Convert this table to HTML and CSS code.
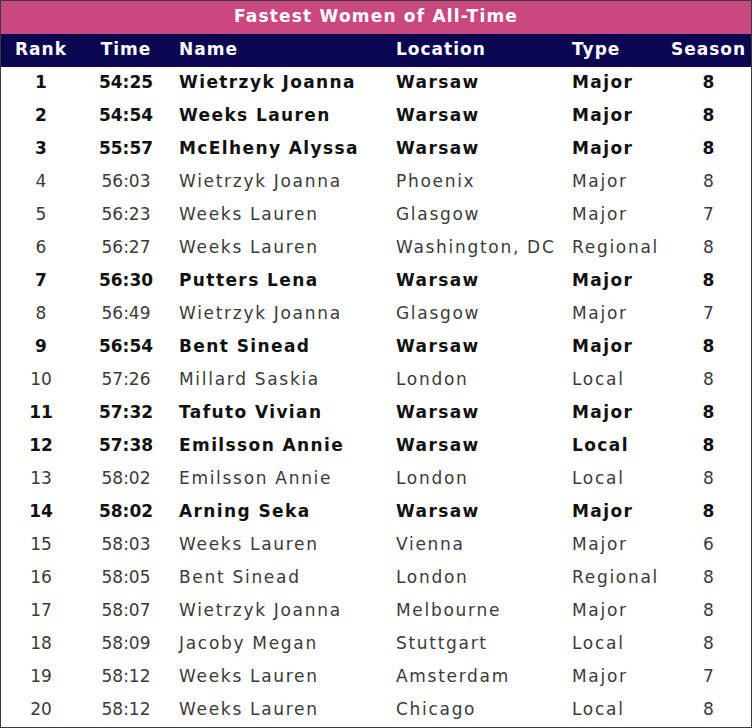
FILE: index.html
```html
<!DOCTYPE html>
<html>
<head>
<meta charset="utf-8">
<link rel="stylesheet" href="styles.css">
</head>
<body>
<div class="board">
  <div class="title">Fastest Women of All-Time</div>
  <table class="grid">
    <colgroup>
      <col class="c-rank"><col class="c-time"><col class="c-name"><col class="c-loc"><col class="c-type"><col class="c-season">
    </colgroup>
    <thead>
      <tr><th class="ctr">Rank</th><th class="ctr">Time</th><th>Name</th><th>Location</th><th>Type</th><th class="ctr">Season</th></tr>
    </thead>
    <tbody>
      <tr class="b"><td class="ctr">1</td><td class="ctr">54:25</td><td class="txt">Wietrzyk Joanna</td><td class="txt">Warsaw</td><td class="txt">Major</td><td class="ctr">8</td></tr>
      <tr class="b"><td class="ctr">2</td><td class="ctr">54:54</td><td class="txt">Weeks Lauren</td><td class="txt">Warsaw</td><td class="txt">Major</td><td class="ctr">8</td></tr>
      <tr class="b"><td class="ctr">3</td><td class="ctr">55:57</td><td class="txt">McElheny Alyssa</td><td class="txt">Warsaw</td><td class="txt">Major</td><td class="ctr">8</td></tr>
      <tr><td class="ctr">4</td><td class="ctr">56:03</td><td class="txt">Wietrzyk Joanna</td><td class="txt">Phoenix</td><td class="txt">Major</td><td class="ctr">8</td></tr>
      <tr><td class="ctr">5</td><td class="ctr">56:23</td><td class="txt">Weeks Lauren</td><td class="txt">Glasgow</td><td class="txt">Major</td><td class="ctr">7</td></tr>
      <tr><td class="ctr">6</td><td class="ctr">56:27</td><td class="txt">Weeks Lauren</td><td class="txt">Washington, DC</td><td class="txt">Regional</td><td class="ctr">8</td></tr>
      <tr class="b"><td class="ctr">7</td><td class="ctr">56:30</td><td class="txt">Putters Lena</td><td class="txt">Warsaw</td><td class="txt">Major</td><td class="ctr">8</td></tr>
      <tr><td class="ctr">8</td><td class="ctr">56:49</td><td class="txt">Wietrzyk Joanna</td><td class="txt">Glasgow</td><td class="txt">Major</td><td class="ctr">7</td></tr>
      <tr class="b"><td class="ctr">9</td><td class="ctr">56:54</td><td class="txt">Bent Sinead</td><td class="txt">Warsaw</td><td class="txt">Major</td><td class="ctr">8</td></tr>
      <tr><td class="ctr">10</td><td class="ctr">57:26</td><td class="txt">Millard Saskia</td><td class="txt">London</td><td class="txt">Local</td><td class="ctr">8</td></tr>
      <tr class="b"><td class="ctr">11</td><td class="ctr">57:32</td><td class="txt">Tafuto Vivian</td><td class="txt">Warsaw</td><td class="txt">Major</td><td class="ctr">8</td></tr>
      <tr class="b"><td class="ctr">12</td><td class="ctr">57:38</td><td class="txt">Emilsson Annie</td><td class="txt">Warsaw</td><td class="txt">Local</td><td class="ctr">8</td></tr>
      <tr><td class="ctr">13</td><td class="ctr">58:02</td><td class="txt">Emilsson Annie</td><td class="txt">London</td><td class="txt">Local</td><td class="ctr">8</td></tr>
      <tr class="b"><td class="ctr">14</td><td class="ctr">58:02</td><td class="txt">Arning Seka</td><td class="txt">Warsaw</td><td class="txt">Major</td><td class="ctr">8</td></tr>
      <tr><td class="ctr">15</td><td class="ctr">58:03</td><td class="txt">Weeks Lauren</td><td class="txt">Vienna</td><td class="txt">Major</td><td class="ctr">6</td></tr>
      <tr><td class="ctr">16</td><td class="ctr">58:05</td><td class="txt">Bent Sinead</td><td class="txt">London</td><td class="txt">Regional</td><td class="ctr">8</td></tr>
      <tr><td class="ctr">17</td><td class="ctr">58:07</td><td class="txt">Wietrzyk Joanna</td><td class="txt">Melbourne</td><td class="txt">Major</td><td class="ctr">8</td></tr>
      <tr><td class="ctr">18</td><td class="ctr">58:09</td><td class="txt">Jacoby Megan</td><td class="txt">Stuttgart</td><td class="txt">Local</td><td class="ctr">8</td></tr>
      <tr><td class="ctr">19</td><td class="ctr">58:12</td><td class="txt">Weeks Lauren</td><td class="txt">Amsterdam</td><td class="txt">Major</td><td class="ctr">7</td></tr>
      <tr><td class="ctr">20</td><td class="ctr">58:12</td><td class="txt">Weeks Lauren</td><td class="txt">Chicago</td><td class="txt">Local</td><td class="ctr">8</td></tr>
    </tbody>
  </table>
</div>
</body>
</html>
```
FILE: styles.css
```css
html, body {
  margin: 0;
  padding: 0;
  background: #ffffff;
}
.board {
  width: 752px;
  height: 728px;
  box-sizing: border-box;
  border: 1px solid #3a3a3a;
  font-family: "DejaVu Sans", "Noto Sans", sans-serif;
  overflow: hidden;
}
.title {
  height: 33px;
  box-sizing: border-box;
  padding-bottom: 2px;
  line-height: 31px;
  background: #c9487f;
  color: #ffffff;
  font-weight: bold;
  font-size: 17px;
  letter-spacing: 1.2px;
  text-align: center;
}
.grid {
  width: 750px;
  border-collapse: collapse;
  table-layout: fixed;
}
.c-rank { width: 80px; }
.c-time { width: 90px; }
.c-name { width: 217px; }
.c-loc { width: 176px; }
.c-type { width: 102px; }
.c-season { width: 85px; }
.grid th, .grid td {
  height: 33px;
  padding: 0 0 3px 8px;
  text-align: left;
  white-space: nowrap;
  font-size: 17px;
  box-sizing: border-box;
}
.grid th {
  background: #0b0652;
  color: #ffffff;
  font-weight: bold;
  letter-spacing: 1px;
}
.grid td {
  color: #3a3a3a;
  font-weight: normal;
}
.grid td.txt {
  letter-spacing: 1.7px;
}
.grid tr.b td {
  color: #111111;
  font-weight: bold;
}
.grid tr.b td.txt {
  letter-spacing: 1.4px;
}
.grid .ctr {
  text-align: center;
  padding: 0 0 3px 0;
}
```
